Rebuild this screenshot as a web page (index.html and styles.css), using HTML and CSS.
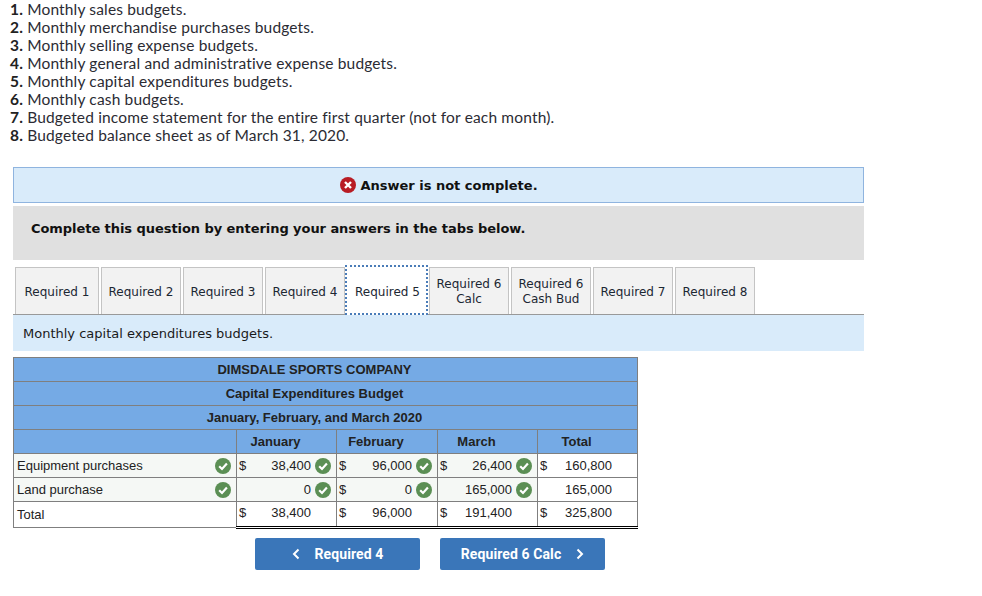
FILE: index.html
```html
<!DOCTYPE html>
<html lang="en">
<head>
<meta charset="utf-8">
<title>Capital Expenditures Budget</title>
<link rel="stylesheet" href="styles.css">
</head>
<body>
<svg class="defs" width="0" height="0" aria-hidden="true">
  <symbol id="ok" viewBox="0 0 16 16">
    <circle cx="8" cy="8" r="8" fill="#5b8f54"/>
    <path d="M4.2 8.3 7 11 11.9 5.6" fill="none" stroke="#fff" stroke-width="2.2"/>
  </symbol>
</svg>
<ol class="list">
  <li><b>1.</b> Monthly sales budgets.</li>
  <li><b>2.</b> Monthly merchandise purchases budgets.</li>
  <li><b>3.</b> Monthly selling expense budgets.</li>
  <li><b>4.</b> Monthly general and administrative expense budgets.</li>
  <li><b>5.</b> Monthly capital expenditures budgets.</li>
  <li><b>6.</b> Monthly cash budgets.</li>
  <li><b>7.</b> Budgeted income statement for the entire first quarter (not for each month).</li>
  <li><b>8.</b> Budgeted balance sheet as of March 31, 2020.</li>
</ol>
<main class="panel">
  <div class="alert">
    <svg class="x-icon" viewBox="0 0 16 16" aria-hidden="true"><circle cx="8" cy="8" r="8" fill="#b81c24"/><path d="M5 5 11 11M11 5 5 11" stroke="#fff" stroke-width="2.4"/></svg>
    <span>Answer is not complete.</span>
  </div>
  <div class="prompt">Complete this question by entering your answers in the tabs below.</div>
  <div class="tabs">
    <div class="tab first">Required 1</div>
    <div class="tab">Required 2</div>
    <div class="tab">Required 3</div>
    <div class="tab">Required 4</div>
    <div class="tab active">Required 5</div>
    <div class="tab">Required 6<br>Calc</div>
    <div class="tab">Required 6<br>Cash Bud</div>
    <div class="tab">Required 7</div>
    <div class="tab">Required 8</div>
  </div>
  <div class="band">Monthly capital expenditures budgets.</div>
  <table class="budget">
    <colgroup><col class="c0"><col class="c1"><col class="c2"><col class="c3"><col class="c4"></colgroup>
    <thead>
      <tr><th colspan="5">DIMSDALE SPORTS COMPANY</th></tr>
      <tr><th colspan="5">Capital Expenditures Budget</th></tr>
      <tr><th colspan="5">January, February, and March 2020</th></tr>
      <tr><th></th><th>January</th><th>February</th><th>March</th><th>Total</th></tr>
    </thead>
    <tbody>
      <tr class="tint">
        <td class="label"><div class="cell"><span class="grow">Equipment purchases</span><svg class="ok"><use href="#ok"/></svg></div></td>
        <td><div class="cell"><span>$</span><span class="grow num">38,400</span><svg class="ok"><use href="#ok"/></svg></div></td>
        <td><div class="cell"><span>$</span><span class="grow num">96,000</span><svg class="ok"><use href="#ok"/></svg></div></td>
        <td><div class="cell"><span>$</span><span class="grow num">26,400</span><svg class="ok"><use href="#ok"/></svg></div></td>
        <td class="plain"><div class="cell"><span>$</span><span class="grow num">160,800</span><i class="ok"></i></div></td>
      </tr>
      <tr class="tint">
        <td class="label"><div class="cell"><span class="grow">Land purchase</span><svg class="ok"><use href="#ok"/></svg></div></td>
        <td><div class="cell"><span class="grow num">0</span><svg class="ok"><use href="#ok"/></svg></div></td>
        <td><div class="cell"><span>$</span><span class="grow num">0</span><svg class="ok"><use href="#ok"/></svg></div></td>
        <td><div class="cell"><span class="grow num">165,000</span><svg class="ok"><use href="#ok"/></svg></div></td>
        <td class="plain"><div class="cell"><span class="grow num">165,000</span><i class="ok"></i></div></td>
      </tr>
      <tr class="total">
        <td class="label"><div class="cell"><span class="grow">Total</span></div></td>
        <td><div class="cell"><span>$</span><span class="grow num">38,400</span><i class="ok"></i></div></td>
        <td><div class="cell"><span>$</span><span class="grow num">96,000</span><i class="ok"></i></div></td>
        <td><div class="cell"><span>$</span><span class="grow num">191,400</span><i class="ok"></i></div></td>
        <td><div class="cell"><span>$</span><span class="grow num">325,800</span><i class="ok"></i></div></td>
      </tr>
    </tbody>
  </table>
  <div class="nav">
    <button class="btn" type="button"><svg class="chev" viewBox="0 0 8 12" aria-hidden="true"><path d="M6.5 1.5 2 6l4.5 4.500" fill="none" stroke="#fff" stroke-width="2"/></svg><span>Required 4</span></button>
    <button class="btn" type="button"><span>Required 6 Calc</span><svg class="chev" viewBox="0 0 8 12" aria-hidden="true"><path d="M1.500 1.500 6 6l-4.500 4.500" fill="none" stroke="#fff" stroke-width="2"/></svg></button>
  </div>
</main>
</body>
</html>
```
FILE: styles.css
```css
* { box-sizing: border-box; }
html, body { margin: 0; padding: 0; background: #fff; }
body { width: 982px; height: 596px; overflow: hidden; color: #1a1a1a; }
.defs { display: block; height: 0; }

.list { list-style: none; margin: 0; padding: 0 0 0 10px; height: 145px; font: 15.500px/18px Lato, "Open Sans", sans-serif; letter-spacing: .16px; color: #2b2b33; }
.list b { color: #222; }

.panel { width: 851px; margin: 22px 0 0 13px; font-family: "DejaVu Sans", Verdana, sans-serif; }

.alert { height: 36px; display: flex; align-items: center; justify-content: center; gap: 4px; background: #d9ebfa; border: 1px solid #8fb4df; font-size: 13px; font-weight: 700; color: #111; padding-left: 1px; }
.x-icon { width: 16px; height: 16px; flex: none; }

.prompt { height: 54px; margin-top: 3px; padding: 15px 18px; background: #e0e0e0; font-size: 13px; line-height: 16px; font-weight: 700; letter-spacing: -.06px; color: #111; }

.tabs { height: 48px; margin-top: 7px; padding-left: 2px; display: flex; align-items: flex-end; border-bottom: 1px solid #999; }
.tab { width: 80px; height: 47px; margin-right: 2px; padding-top: 2px; display: flex; align-items: center; justify-content: center; text-align: center; background: #f2f2f2; border: 1px solid #c4c4c4; border-bottom: 0; font-size: 12px; line-height: 15px; color: #1c2733; }
.tab.first { width: 84px; }
.tab.active { width: 83px; height: 50px; margin: 0 1px -1px -2px; padding: 4px 0 0 2px; background: #fff; border: 2px dotted #4a7cb8; position: relative; }

.band { height: 36px; padding: 0 10px; display: flex; align-items: center; background: #d9ebfa; font-size: 13px; color: #1a1a1a; }

.budget { width: 625px; margin-top: 6px; border-collapse: collapse; table-layout: fixed; font: 13px/16px "Liberation Sans", Arial, sans-serif; color: #222; }
.c0 { width: 223px; }
.c1, .c3, .c4 { width: 100px; }
.c2 { width: 101px; }
.budget th { height: 24px; padding: 0 22px 0 0; background: #75aae5; border: 1px solid #7f7f7f; font-weight: 700; text-align: center; color: #222; }
.budget td { height: 24px; padding: 0; border: 1px solid #7f7f7f; background: #fff; }
.tint td { background: #f5f8f5; }
.tint td.plain { background: #fff; }
.cell { display: flex; align-items: center; padding: 0 5px 0 2px; }
.label .cell { padding-left: 3px; }
.grow { flex: 1; min-width: 0; }
.num { text-align: right; }
.ok { display: block; flex: none; width: 16px; height: 16px; margin-left: 4px; }
.total td { height: 26px; border-top: 1px solid #000; border-bottom: 3px double #000; padding-bottom: 2px; }
.total td.label { border-top-color: #7f7f7f; border-bottom: 1px solid #7f7f7f; padding-bottom: 0; }

.nav { display: flex; gap: 20px; margin: 9px 0 0 242px; }
.btn { width: 165px; height: 32px; display: flex; align-items: center; justify-content: center; gap: 15px; padding: 0; background: #3a76b9; border: 0; border-radius: 2px; color: #fff; font: 700 14px/16px Roboto, sans-serif; letter-spacing: .1px; }
.chev { width: 8px; height: 12px; flex: none; }
```
